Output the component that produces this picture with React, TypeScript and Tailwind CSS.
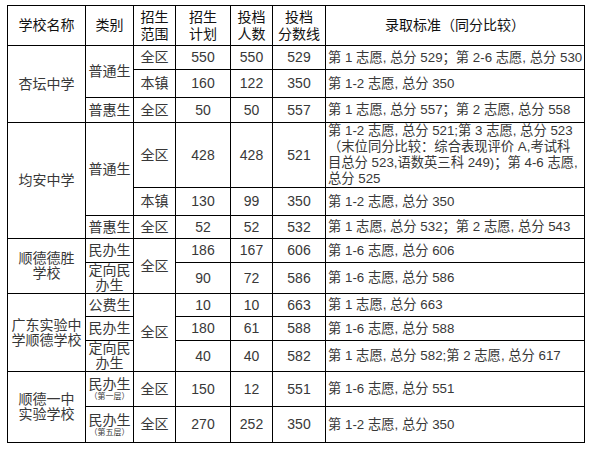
import React from "react";

type TdProps = {
  children?: React.ReactNode;
  rs?: number;
  className?: string;
};

function Td({ children, rs, className = "" }: TdProps) {
  return (
    <td rowSpan={rs} className={"border border-black p-0 text-center align-middle " + className}>
      {children}
    </td>
  );
}

function Crit({ children }: { children: React.ReactNode }) {
  return <Td className="text-left pl-[2px] text-[13.3px] leading-[16px] whitespace-nowrap">{children}</Td>;
}

function Two({ a, b }: { a: string; b: string }) {
  return (
    <div className="leading-[15px]">
      {a}
      <br />
      {b}
    </div>
  );
}

function Layer({ sub }: { sub: string }) {
  return (
    <div>
      <div className="leading-[16px]">民办生</div>
      <div className="text-[8px] leading-[10px]">{sub}</div>
    </div>
  );
}

export default function App() {
  return (
    <div className="w-[594px] h-[452px] bg-white pl-[7px] pt-[5px] text-[#383838] font-['Liberation_Sans','Noto_Sans_CJK_SC',sans-serif] text-[14px]">
      <table className="table-fixed border-collapse w-[577px]">
        <colgroup>
          <col className="w-[78px]" />
          <col className="w-[48px]" />
          <col className="w-[42px]" />
          <col className="w-[55px]" />
          <col className="w-[42px]" />
          <col className="w-[53px]" />
          <col className="w-[259px]" />
        </colgroup>
        <tbody>
          <tr className="h-[40px] text-[#111]">
            <Td>学校名称</Td>
            <Td>类别</Td>
            <Td className="leading-[17px]">招生<br />范围</Td>
            <Td className="leading-[17px]">招生<br />计划</Td>
            <Td className="leading-[17px]">投档<br />人数</Td>
            <Td className="leading-[17px]">投档<br />分数线</Td>
            <Td>录取标准（同分比较）</Td>
          </tr>

          <tr className="h-[24px]">
            <Td rs={3}>杏坛中学</Td>
            <Td rs={2}>普通生</Td>
            <Td>全区</Td>
            <Td>550</Td>
            <Td>550</Td>
            <Td>529</Td>
            <Crit>第 1 志愿, 总分 529；第 2-6 志愿, 总分 530</Crit>
          </tr>
          <tr className="h-[28px]">
            <Td>本镇</Td>
            <Td>160</Td>
            <Td>122</Td>
            <Td>350</Td>
            <Crit>第 1-2 志愿, 总分 350</Crit>
          </tr>
          <tr className="h-[25px]">
            <Td>普惠生</Td>
            <Td>全区</Td>
            <Td>50</Td>
            <Td>50</Td>
            <Td>557</Td>
            <Crit>第 1 志愿, 总分 557；第 2 志愿, 总分 558</Crit>
          </tr>

          <tr className="h-[65px]">
            <Td rs={3}>均安中学</Td>
            <Td rs={2}>普通生</Td>
            <Td>全区</Td>
            <Td>428</Td>
            <Td>428</Td>
            <Td>521</Td>
            <Crit>
              第 1-2 志愿, 总分 521;第 3 志愿, 总分 523
              <br />
              （末位同分比较：综合表现评价 A,考试科
              <br />
              目总分 523,语数英三科 249)；第 4-6 志愿,
              <br />
              总分 525
            </Crit>
          </tr>
          <tr className="h-[28px]">
            <Td>本镇</Td>
            <Td>130</Td>
            <Td>99</Td>
            <Td>350</Td>
            <Crit>第 1-2 志愿, 总分 350</Crit>
          </tr>
          <tr className="h-[23px]">
            <Td>普惠生</Td>
            <Td>全区</Td>
            <Td>52</Td>
            <Td>52</Td>
            <Td>532</Td>
            <Crit>第 1 志愿, 总分 532；第 2 志愿, 总分 543</Crit>
          </tr>

          <tr className="h-[24px]">
            <Td rs={2}><Two a="顺德德胜" b="学校" /></Td>
            <Td>民办生</Td>
            <Td rs={2}>全区</Td>
            <Td>186</Td>
            <Td>167</Td>
            <Td>606</Td>
            <Crit>第 1-6 志愿, 总分 606</Crit>
          </tr>
          <tr className="h-[31px]">
            <Td><Two a="定向民" b="办生" /></Td>
            <Td>90</Td>
            <Td>72</Td>
            <Td>586</Td>
            <Crit>第 1-6 志愿, 总分 586</Crit>
          </tr>

          <tr className="h-[23px]">
            <Td rs={3}><Two a="广东实验中" b="学顺德学校" /></Td>
            <Td>公费生</Td>
            <Td rs={3}>全区</Td>
            <Td>10</Td>
            <Td>10</Td>
            <Td>663</Td>
            <Crit>第 1 志愿, 总分 663</Crit>
          </tr>
          <tr className="h-[24px]">
            <Td>民办生</Td>
            <Td>180</Td>
            <Td>61</Td>
            <Td>588</Td>
            <Crit>第 1-6 志愿, 总分 588</Crit>
          </tr>
          <tr className="h-[31px]">
            <Td><Two a="定向民" b="办生" /></Td>
            <Td>40</Td>
            <Td>40</Td>
            <Td>582</Td>
            <Crit>第 1 志愿, 总分 582;第 2 志愿, 总分 617</Crit>
          </tr>

          <tr className="h-[35px]">
            <Td rs={2}><Two a="顺德一中" b="实验学校" /></Td>
            <Td><Layer sub="（第一层）" /></Td>
            <Td>全区</Td>
            <Td>150</Td>
            <Td>12</Td>
            <Td>551</Td>
            <Crit>第 1-6 志愿, 总分 551</Crit>
          </tr>
          <tr className="h-[36px]">
            <Td><Layer sub="（第五层）" /></Td>
            <Td>全区</Td>
            <Td>270</Td>
            <Td>252</Td>
            <Td>350</Td>
            <Crit>第 1-2 志愿, 总分 350</Crit>
          </tr>
        </tbody>
      </table>
    </div>
  );
}
